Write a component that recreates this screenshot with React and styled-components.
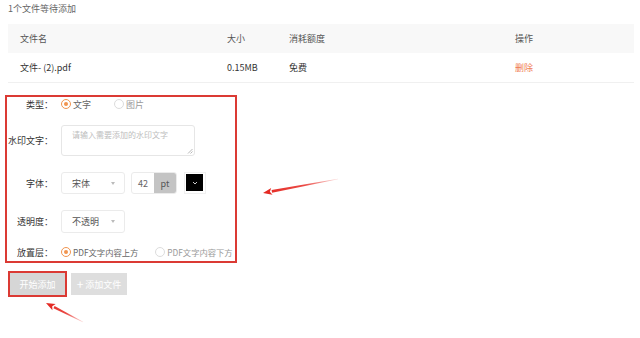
import React, { useState } from 'react';
import styled, { createGlobalStyle } from 'styled-components';

const GlobalStyle = createGlobalStyle`
  body {
    margin: 0;
    background: #fff;
    font-family: "Noto Sans CJK SC", "Noto Sans", sans-serif;
    font-size: 9px;
    color: #333;
  }
`;

const Page = styled.div`
  position: relative;
  width: 640px;
  height: 338px;
  padding: 0 6px 0 8px;
  box-sizing: border-box;
  overflow: hidden;
`;

const Status = styled.div`
  padding-top: 3px;
  line-height: 12px;
  color: #666;
`;

const Table = styled.div`
  margin-top: 9px;
  width: 626px;
`;

const TableRow = styled.div`
  display: grid;
  grid-template-columns: 207px 62px 226px 1fr;
  align-items: center;
  height: 29px;
  padding-left: 12px;
  background: ${(p) => (p.$head ? '#f8f8f8' : '#fff')};
  border-bottom: ${(p) => (p.$head ? 'none' : '1px solid #f0f0f0')};
  color: ${(p) => (p.$head ? '#555' : '#333')};
`;

const DeleteLink = styled.span`
  color: #ef7b52;
`;

const FormBox = styled.div`
  margin: 12px 0 0 -3px;
  width: 232px;
  box-sizing: border-box;
  border: 2px solid #db3a34;
  padding-bottom: 2px;
  display: flex;
  flex-direction: column;
`;

const Row = styled.div`
  display: flex;
  align-items: center;
  height: ${(p) => p.$h}px;
  margin-top: ${(p) => p.$mt || 0}px;
`;

const Label = styled.div`
  flex-shrink: 0;
  width: 46px;
  margin-right: 8px;
  text-align: right;
  color: #333;
  white-space: nowrap;
`;

const RadioItem = styled.label`
  flex-shrink: 0;
  display: flex;
  align-items: center;
  gap: 2px;
  margin-right: ${(p) => p.$gap}px;
  font-size: ${(p) => p.$size || 9}px;
  color: ${(p) => (p.$on ? '#666' : '#999')};
  white-space: nowrap;
`;

const RadioDot = styled.span`
  width: 10px;
  height: 10px;
  box-sizing: border-box;
  border-radius: 50%;
  border: 1px solid ${(p) => (p.$on ? '#f1944f' : '#dcdcdc')};
  display: flex;
  align-items: center;
  justify-content: center;
  &::after {
    content: '';
    width: 4px;
    height: 4px;
    border-radius: 50%;
    background: ${(p) => (p.$on ? '#f1944f' : 'transparent')};
  }
`;

const TextArea = styled.div`
  position: relative;
  width: 134px;
  height: 31px;
  box-sizing: border-box;
  border: 1px solid #e6e6e6;
  border-radius: 3px;
  padding: 3px 10px;
  color: #bdbdbd;
  font-size: 8px;
`;

const ResizeGrip = styled.svg`
  position: absolute;
  right: 1px;
  bottom: 1px;
`;

const Select = styled.div`
  width: 64px;
  height: ${(p) => p.$h}px;
  box-sizing: border-box;
  border: 1px solid #ebebeb;
  border-radius: 3px;
  padding: 0 9px 0 10px;
  display: flex;
  align-items: center;
  justify-content: space-between;
  color: #555;
`;

const Caret = styled.span`
  width: 0;
  height: 0;
  border-left: 2.5px solid transparent;
  border-right: 2.5px solid transparent;
  border-top: 3px solid #bbb;
`;

const NumberBox = styled.div`
  margin-left: 6px;
  width: 46px;
  height: 22px;
  box-sizing: border-box;
  border: 1px solid #ebebeb;
  border-radius: 3px;
  display: flex;
  overflow: hidden;
`;

const NumberValue = styled.div`
  flex: 1;
  display: flex;
  align-items: center;
  justify-content: center;
  color: #666;
`;

const Unit = styled.div`
  width: 22px;
  background: #c4c4c4;
  display: flex;
  align-items: center;
  justify-content: center;
  color: #555;
`;

const Swatch = styled.div`
  margin-left: 7px;
  width: 22px;
  height: 22px;
  box-sizing: border-box;
  border: 1px solid #f0f0f0;
  padding: 1px 2px 2px 1px;
  display: flex;
`;

const SwatchFill = styled.div`
  flex: 1;
  background: #000;
  display: flex;
  align-items: center;
  justify-content: center;
`;

const Buttons = styled.div`
  display: flex;
  align-items: center;
  margin-top: 8px;
  gap: 4px;
`;

const Button = styled.div`
  height: 22px;
  width: ${(p) => p.$w}px;
  box-sizing: content-box;
  border: ${(p) => (p.$marked ? '2px solid #db3a34' : 'none')};
  background: ${(p) => (p.$marked ? '#d6d6d6' : '#dedede')};
  color: #fff;
  display: flex;
  align-items: center;
  justify-content: center;
  gap: 2px;
`;

const Plus = styled.span`
  font-size: 12px;
  line-height: 1;
  margin-top: -1px;
`;

const Arrows = styled.svg`
  position: absolute;
  left: 0;
  top: 0;
  pointer-events: none;
`;

const Radio = ({ on, gap, size, children }) => (
  <RadioItem $on={on} $gap={gap} $size={size}>
    <RadioDot $on={on} />
    {children}
  </RadioItem>
);

const Arrow = ({ x1, y1, x2, y2, id }) => {
  const a = Math.atan2(y2 - y1, x2 - x1);
  const len = 9;
  const w = 3.5;
  const bx = x2 - Math.cos(a) * len;
  const by = y2 - Math.sin(a) * len;
  const nx = -Math.sin(a);
  const ny = Math.cos(a);
  const head = `${x2},${y2} ${bx + nx * w},${by + ny * w} ${bx + Math.cos(a) * 2},${by + Math.sin(a) * 2} ${bx - nx * w},${by - ny * w}`;
  const shaft = `${x1 + nx * 0.3},${y1 + ny * 0.3} ${bx + nx * 1.3},${by + ny * 1.3} ${bx - nx * 1.3},${by - ny * 1.3} ${x1 - nx * 0.3},${y1 - ny * 0.3}`;
  return (
    <g>
      <defs>
        <linearGradient id={id} gradientUnits="userSpaceOnUse" x1={x1} y1={y1} x2={x2} y2={y2}>
          <stop offset="0" stopColor="#e8352f" stopOpacity="0.15" />
          <stop offset="0.45" stopColor="#e8352f" stopOpacity="0.9" />
          <stop offset="1" stopColor="#e42a24" />
        </linearGradient>
      </defs>
      <polygon points={shaft} fill={`url(#${id})`} />
      <polygon points={head} fill="#e42a24" />
    </g>
  );
};

const App = () => {
  const [type] = useState('text');
  return (
    <Page>
      <GlobalStyle />
      <Status>1个文件等待添加</Status>
      <Table>
        <TableRow $head>
          <span>文件名</span>
          <span>大小</span>
          <span>消耗额度</span>
          <span>操作</span>
        </TableRow>
        <TableRow>
          <span>文件- (2).pdf</span>
          <span>0.15MB</span>
          <span>免费</span>
          <DeleteLink>删除</DeleteLink>
        </TableRow>
      </Table>

      <FormBox>
        <Row $h={14}>
          <Label>类型：</Label>
          <Radio on={type === 'text'} gap={23}>文字</Radio>
          <Radio on={type === 'image'} gap={0}>图片</Radio>
        </Row>
        <Row $h={31} $mt={14}>
          <Label>水印文字：</Label>
          <TextArea>
            请输入需要添加的水印文字
            <ResizeGrip width="6" height="6" viewBox="0 0 6 6">
              <path d="M1 5.5 L5.5 1 M3.5 5.5 L5.5 3.5" stroke="#999" strokeWidth="0.7" />
            </ResizeGrip>
          </TextArea>
        </Row>
        <Row $h={22} $mt={16}>
          <Label>字体：</Label>
          <Select $h={22}>
            宋体
            <Caret />
          </Select>
          <NumberBox>
            <NumberValue>42</NumberValue>
            <Unit>pt</Unit>
          </NumberBox>
          <Swatch>
            <SwatchFill>
              <svg width="6" height="4" viewBox="0 0 6 4">
                <path d="M1 1 L3 3 L5 1" stroke="#fff" strokeWidth="0.8" fill="none" />
              </svg>
            </SwatchFill>
          </Swatch>
        </Row>
        <Row $h={23} $mt={16}>
          <Label>透明度：</Label>
          <Select $h={23}>
            不透明
            <Caret />
          </Select>
        </Row>
        <Row $h={14} $mt={12}>
          <Label>放置层：</Label>
          <Radio on gap={17} size={8.3}>PDF文字内容上方</Radio>
          <Radio on={false} gap={0} size={8.3}>PDF文字内容下方</Radio>
        </Row>
      </FormBox>

      <Buttons>
        <Button $marked $w={55}>开始添加</Button>
        <Button $w={56}>
          <Plus>+</Plus>
          添加文件
        </Button>
      </Buttons>

      <Arrows width="640" height="338" viewBox="0 0 640 338">
        <Arrow id="a1" x1={338} y1={179} x2={263} y2={193} />
        <Arrow id="a2" x1={83} y1={322} x2={46} y2={303} />
      </Arrows>
    </Page>
  );
};

export default App;
